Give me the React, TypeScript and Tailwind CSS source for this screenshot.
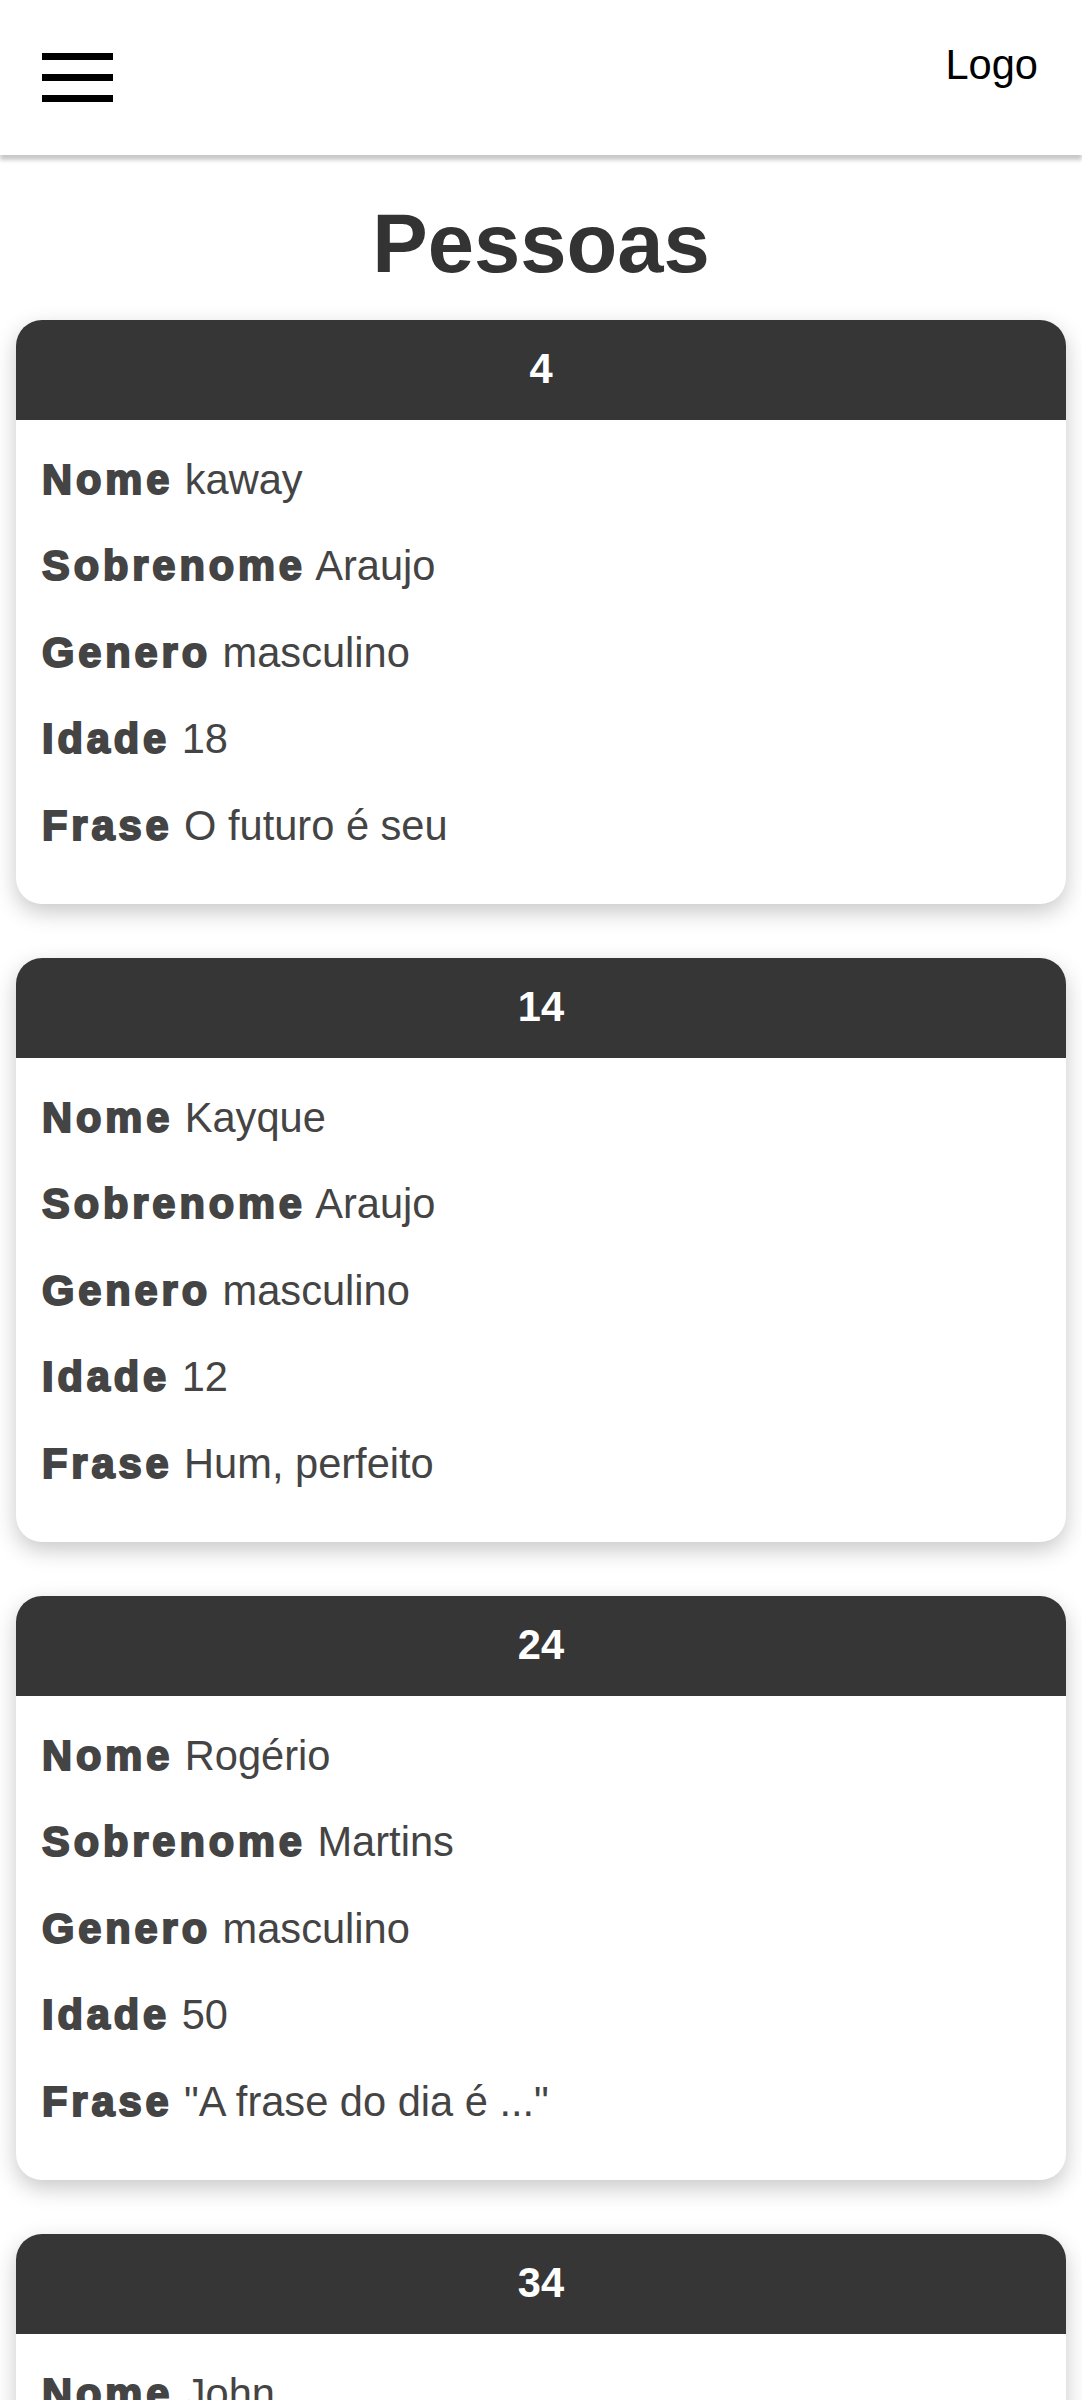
const pessoas = [
  { id: 4, nome: 'kaway', sobrenome: 'Araujo', genero: 'masculino', idade: 18, frase: 'O futuro é seu' },
  { id: 14, nome: 'Kayque', sobrenome: 'Araujo', genero: 'masculino', idade: 12, frase: 'Hum, perfeito' },
  { id: 24, nome: 'Rogério', sobrenome: 'Martins', genero: 'masculino', idade: 50, frase: '"A frase do dia é ..."' },
  { id: 34, nome: 'John', sobrenome: 'Doe', genero: 'masculino', idade: 30, frase: 'Olá mundo' },
];

const Campo = ({ label, valor }: { label: string; valor: string | number }) => (
  <p className="h-[48px] leading-[48px] whitespace-nowrap">
    <span className="font-bold tracking-[3.9px] [-webkit-text-stroke:2px_#444]">{label}</span> {valor}
  </p>
);

export default function App() {
  return (
    <div className="min-h-screen bg-white font-['Liberation_Sans',Arial,sans-serif] text-[41.6px]">
      {/* top bar */}
      <header className="relative z-10 flex h-[155px] items-start justify-between bg-white pl-[42px] pr-[44px] shadow-[0_5px_4px_rgba(0,0,0,0.22)]">
        <button className="mt-[53px] flex w-[71px] flex-col gap-[14px]">
          <span className="block h-[7px] w-full bg-black" />
          <span className="block h-[7px] w-full bg-black" />
          <span className="block h-[7px] w-full bg-black" />
        </button>
        <span className="mt-[41px] leading-[48px] text-black">Logo</span>
      </header>

      <h1 className="mt-[41px] text-center text-[83.2px] font-bold leading-[95.6px] text-[#333]">Pessoas</h1>

      <main className="mt-[28px] flex flex-col gap-[54px] px-[16px] pb-[60px]">
        {pessoas.map((p) => (
          <div
            key={p.id}
            className="overflow-hidden rounded-[26px] bg-white shadow-[0_8px_22px_rgba(0,0,0,0.22)]"
          >
            <div className="flex h-[100px] items-center justify-center bg-[#363636] font-bold text-white">
              {p.id}
            </div>
            <div className="flex flex-col gap-[38.5px] px-[26px] pt-[36px] pb-[54px] text-[#444]">
              <Campo label="Nome" valor={p.nome} />
              <Campo label="Sobrenome" valor={p.sobrenome} />
              <Campo label="Genero" valor={p.genero} />
              <Campo label="Idade" valor={p.idade} />
              <Campo label="Frase" valor={p.frase} />
            </div>
          </div>
        ))}
      </main>
    </div>
  );
}
